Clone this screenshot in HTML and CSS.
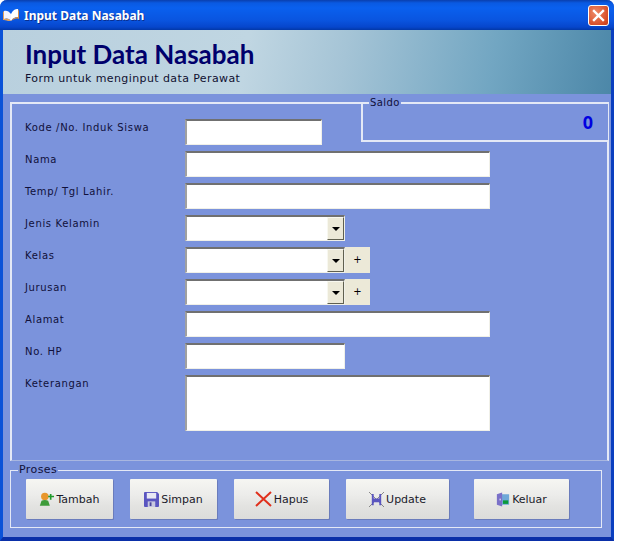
FILE: index.html
```html
<!DOCTYPE html>
<html lang="id">
<head>
<meta charset="utf-8">
<title>Input Data Nasabah</title>
<link rel="stylesheet" href="styles.css">
</head>
<body>
<div class="window">
  <div class="titlebar">
    <svg class="app-icon" viewBox="0 0 16 14" width="16" height="14"><path d="M1 3 C3 2 6 3 8 6 L8 13 C6 10 3 10 1 11Z" fill="#f3f3ff"/><path d="M8 6 C10 2 12 1 15 1 L15 9 C12 9 10 10 8 13Z" fill="#fff"/><path d="M1 3 L1 11 C3 10 6 10 8 13 L5 13 C3 12 1 12 0 12 L0 4Z" fill="#e0a060"/><path d="M15 1 L16 3 L16 11 C13 10 11 11 8 13 C10 10 12 9 15 9Z" fill="#d89048"/></svg>
    <span class="title-text">Input Data Nasabah</span>
    <span class="close-btn"><svg viewBox="0 0 19 19" width="19" height="19"><path d="M5 5 L14 14 M14 5 L5 14" stroke="#fff" stroke-width="2.4" stroke-linecap="square"/></svg></span>
  </div>
  <div class="banner">
    <h1 class="banner-title">Input Data Nasabah</h1>
    <p class="banner-sub">Form untuk menginput data Perawat</p>
  </div>
  <div class="content">
    <div class="main-frame">
      <div class="saldo">
        <span class="frame-legend saldo-legend">Saldo</span>
        <span class="saldo-value">0</span>
      </div>
      <form class="form">
        <label class="label">Kode /No. Induk Siswa</label><div class="field"><input class="input w-kode" type="text"></div>
        <label class="label">Nama</label><div class="field"><input class="input w-full" type="text"></div>
        <label class="label">Temp/ Tgl Lahir.</label><div class="field"><input class="input w-full" type="text"></div>
        <label class="label">Jenis Kelamin</label><div class="field"><div class="combo"><span class="combo-arrow"><i class="tri"></i></span></div></div>
        <label class="label">Kelas</label><div class="field"><div class="combo"><span class="combo-arrow"><i class="tri"></i></span></div><span class="plus">+</span></div>
        <label class="label">Jurusan</label><div class="field"><div class="combo"><span class="combo-arrow"><i class="tri"></i></span></div><span class="plus">+</span></div>
        <label class="label">Alamat</label><div class="field"><input class="input w-full" type="text"></div>
        <label class="label">No. HP</label><div class="field"><input class="input w-hp" type="text"></div>
        <label class="label">Keterangan</label><div class="field"><textarea class="input w-full area"></textarea></div>
      </form>
    </div>
    <div class="proses-frame">
      <span class="frame-legend proses-legend">Proses</span>
      <button class="btn b-tambah" type="button">
        <svg viewBox="0 0 18 16" width="15" height="14"><circle cx="7" cy="5" r="4.5" fill="#e8962c"/><path d="M1 16 L3 10 C5 9 9 9 11 10 L13 16Z" fill="#3e9c3a"/><path d="M13 2 h2 v2 h3 v2 h-3 v3 h-2 v-3 h-2 v-2 h2Z" fill="#1f9a2a"/></svg>
        <span>Tambah</span>
      </button>
      <button class="btn b-simpan" type="button">
        <svg viewBox="0 0 16 16" width="15" height="15"><path d="M0 1 Q0 0 1 0 H14 L16 2 V15 Q16 16 15 16 H1 Q0 16 0 15Z" fill="#5a55c0"/><rect x="3" y="1" width="10" height="6" fill="#e8e8f4"/><rect x="4" y="10" width="8" height="6" fill="#c8c8e0"/><rect x="6" y="11" width="2" height="4" fill="#4a459c"/></svg>
        <span>Simpan</span>
      </button>
      <button class="btn b-hapus" type="button">
        <svg viewBox="0 0 17 16" width="17" height="16"><path d="M1 1 L16 15 M16 1 L1 15" stroke="#e0301c" stroke-width="2"/></svg>
        <span>Hapus</span>
      </button>
      <button class="btn b-update" type="button">
        <svg viewBox="0 0 16 16" width="15" height="15"><path d="M0 0 L16 16 M16 0 L0 16" stroke="#555" stroke-width=".7"/><path d="M3 2 H5 V7 H11 V2 H13 V14 H11 V11 H5 V14 H3Z" fill="#5a55c0"/></svg>
        <span>Update</span>
      </button>
      <button class="btn b-keluar" type="button">
        <svg viewBox="0 0 16 16" width="14" height="15"><rect x="6" y="2" width="9" height="12" fill="#6fa8d8"/><rect x="8" y="9" width="6" height="4" fill="#0a9a3a"/><path d="M1 2 L7 0 V16 L1 14Z" fill="#7a70c8"/><rect x="4" y="7" width="1.5" height="2" fill="#dde"/></svg>
        <span>Keluar</span>
      </button>
    </div>
  </div>
</div>
</body>
</html>
```

FILE: styles.css
```css
html, body { margin: 0; padding: 0; background: #fff; }
body { width: 617px; height: 549px; overflow: hidden; }
* { box-sizing: border-box; }

.window {
  width: 614px;
  height: 541px;
  border-radius: 7px 7px 0 0;
  background: #7b93dc;
  border-left: 3px solid #0a52d8;
  border-right: 3px solid #0a3fc0;
  border-bottom: 4px solid #0a2fa8;
  display: flex;
  flex-direction: column;
  font-family: "DejaVu Sans", sans-serif;
}

.titlebar {
  height: 30px;
  margin: 0 -3px;
  flex: none;
  display: flex;
  align-items: center;
  padding: 0 5px 0 3px;
  gap: 5px;
  border-radius: 7px 7px 0 0;
  background: linear-gradient(to bottom, #0a3fae 0, #0a5ae2 3px, #0a60ee 8px, #0a55e0 20px, #0646cc 27px, #0238a8 30px);
}
.app-icon { flex: none; }
.title-text {
  color: #fff;
  font: bold 12px "Noto Sans", sans-serif;
  text-shadow: 1px 1px 0 #0a2f90;
  flex: 1;
}
.close-btn {
  width: 21px;
  height: 21px;
  border: 1px solid #fff;
  border-radius: 3px;
  background: radial-gradient(circle at 35% 35%, #ee8a68, #d9502a 70%, #c23a18);
  display: flex;
  align-items: center;
  justify-content: center;
}

.banner {
  height: 64px;
  flex: none;
  padding: 10px 0 0 22px;
  background: linear-gradient(100deg, #b9d0de 0, #c0d6e2 40%, #a5c4d6 56%, #72a6c2 80%, #4c87a8 100%);
}
.banner-title {
  margin: 0;
  font: bold 26px/28px "Lato", sans-serif;
  color: #00006c;
}
.banner-sub {
  margin: 4px 0 0;
  font: 11px/14px "DejaVu Sans", sans-serif;
  letter-spacing: .4px;
  color: #101030;
}

.content {
  position: relative;
  flex: 1;
  padding: 8px 0 0 7px;
}

.main-frame {
  position: relative;
  width: 599px;
  height: 359px;
  border-top: 2px solid #e4e9f6;
  border-left: 2px solid #e4e9f6;
  border-right: 2px solid #e4e9f6;
  border-bottom: 1px solid #a8b6e0;
}
.frame-legend {
  position: absolute;
  top: -8px;
  background: #7b93dc;
  color: #10103a;
  padding: 0 1px;
}
.saldo {
  position: absolute;
  top: -2px;
  right: -2px;
  width: 248px;
  height: 40px;
  border: 2px solid #e4e9f6;
  border-right-width: 1px;
  background: #7b93dc;
}
.saldo-legend { left: 6px; font-size: 10px; line-height: 14px; letter-spacing: .4px; }
.saldo-value {
  position: absolute;
  right: 15px;
  top: 8px;
  font: bold 18px/20px "Noto Sans", sans-serif;
  color: #0000e0;
}

.form {
  display: grid;
  grid-template-columns: 160px 1fr;
  grid-auto-rows: 26px;
  row-gap: 6px;
  padding: 15px 0 0 13px;
}
.label {
  font-size: 10px;
  line-height: 14px;
  color: #10103a;
  padding-top: 2px;
  letter-spacing: .65px;
}
.field { display: flex; }
.input {
  display: block;
  height: 26px;
  padding: 0;
  background: #fff;
  border-style: solid;
  border-width: 2px 1px 1px 2px;
  border-color: #707070 #f0f0e8 #f0f0e8 #a0a0a0;
  outline: none;
  resize: none;
  border-radius: 0;
}
.w-kode { width: 137px; }
.w-full { width: 305px; }
.w-hp { width: 160px; }
.area { height: 56px; }

.combo {
  width: 160px;
  height: 26px;
  background: #fff;
  border-style: solid;
  border-width: 2px 1px 1px 2px;
  border-color: #707070 #f0f0e8 #f0f0e8 #a0a0a0;
  display: flex;
  justify-content: flex-end;
  padding: 0;
}
.combo-arrow {
  width: 17px;
  background: #ece9d8;
  border: 1px solid;
  border-color: #f8f8f0 #606050 #606050 #f8f8f0;
  display: flex;
  align-items: center;
  justify-content: center;
}
.tri {
  display: block;
  border-top: 4px solid #000;
  border-left: 4px solid transparent;
  border-right: 4px solid transparent;
}
.plus {
  width: 25px;
  height: 26px;
  background: #ece9d8;
  font: 10px/26px "DejaVu Sans", sans-serif;
  text-align: center;
  color: #000;
}

.proses-frame {
  position: relative;
  width: 592px;
  height: 58px;
  margin-top: 9px;
  border: 1px solid #e4e9f6;
  display: flex;
  align-items: flex-start;
  padding-top: 8px;
  padding-left: 15px;
}
.proses-legend { left: 7px; font-size: 11px; line-height: 14px; letter-spacing: .4px; }
.btn {
  height: 40px;
  border: 0;
  border-radius: 1px;
  background: linear-gradient(to bottom, #f6f6f2 0, #ececea 40%, #e2e2e0 70%, #dcdcda 100%);
  box-shadow: 1px 1px 0 #6a7cbc;
  display: flex;
  align-items: center;
  justify-content: center;
  gap: 2px;
  padding: 0;
  font: 11px "DejaVu Sans", sans-serif;
  color: #1a1a2a;
  flex: none;
}
.b-tambah { width: 87px; }
.b-simpan { width: 87px; margin-left: 17px; }
.b-hapus { width: 95px; margin-left: 17px; }
.b-update { width: 103px; margin-left: 17px; }
.b-keluar { width: 95px; margin-left: 25px; }
```
